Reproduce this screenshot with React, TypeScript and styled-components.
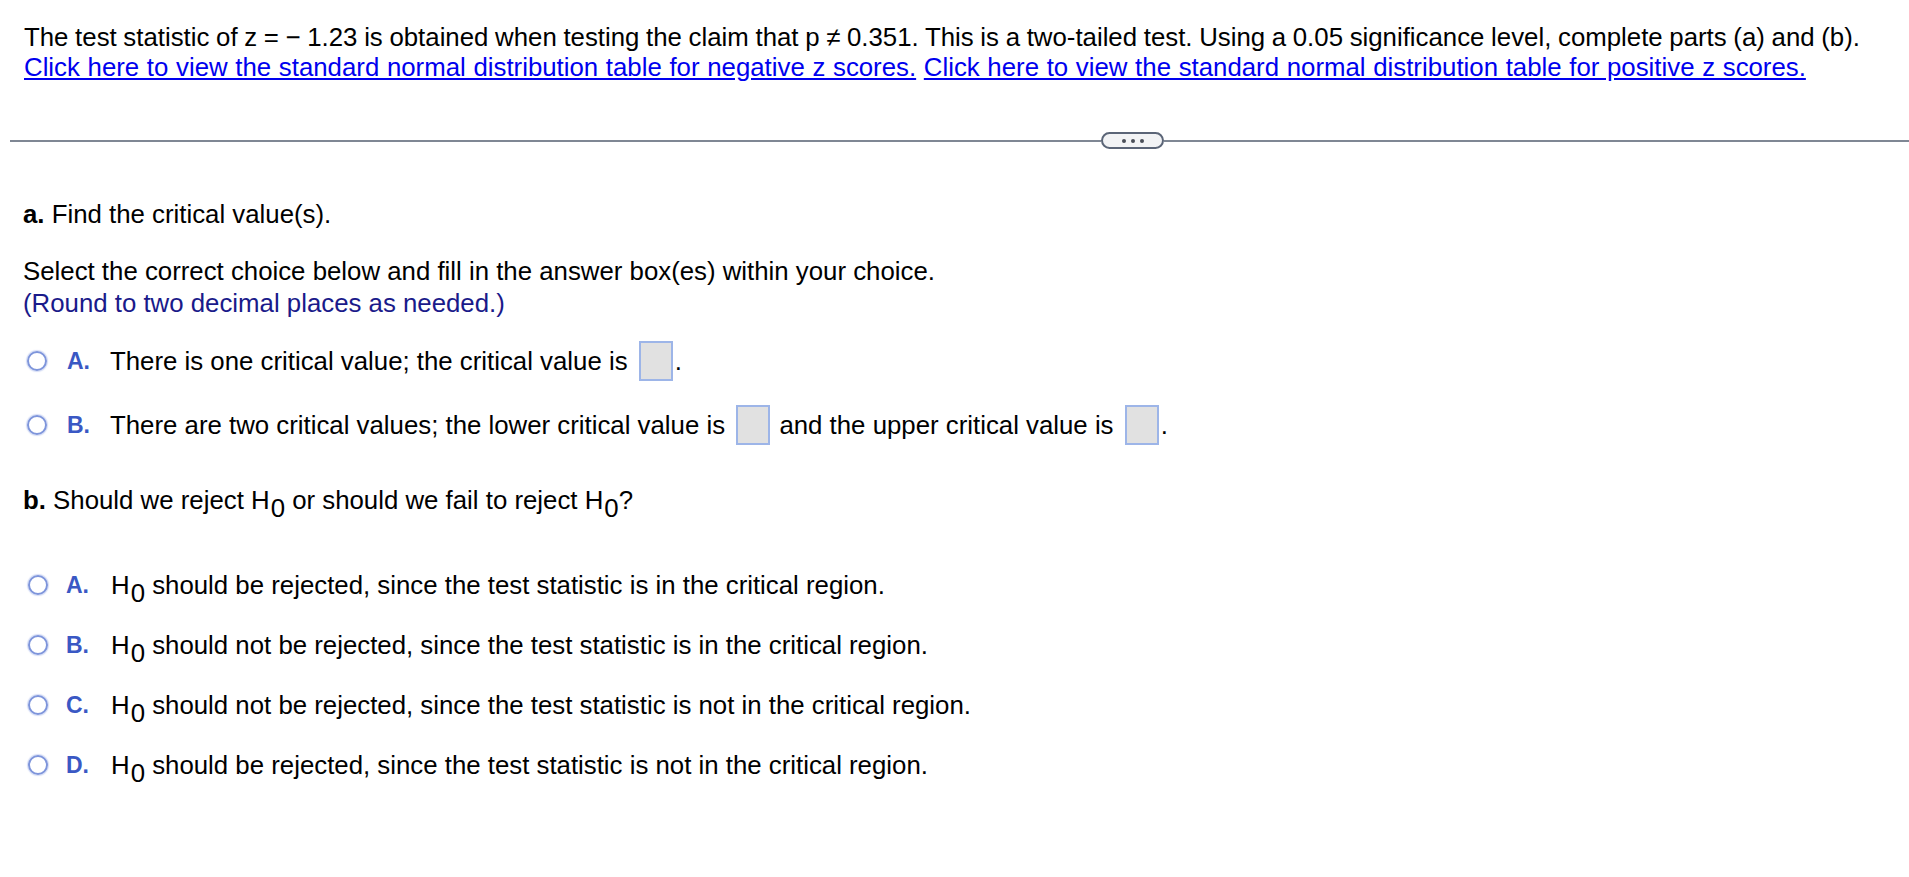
import React from "react";
import styled, { createGlobalStyle } from "styled-components";

const GlobalStyle = createGlobalStyle`
    html, body {
        margin: 0;
        padding: 0;
        background: #ffffff;
    }
    body {
        font-family: "Liberation Sans", Arial, Helvetica, sans-serif;
        font-size: 25.8px;
        color: #000000;
    }
`;

const Page = styled.div`
    padding-top: 22px;
    width: 1909px;
`;

const Prompt = styled.div`
    padding-left: 24px;
    line-height: 30px;
`;

const PromptLine = styled.div<{ $spacing: number }>`
    white-space: nowrap;
    word-spacing: ${(p) => p.$spacing}px;
`;

const TableLink = styled.a`
    color: #0000ee;
    text-decoration: underline;
    cursor: pointer;
`;

const DividerRow = styled.div`
    display: flex;
    align-items: center;
    margin: 50px 0 0 10px;
`;

const Rule = styled.div<{ $width?: number }>`
    height: 2px;
    background: #7f8794;
    ${(p) => (p.$width ? `width: ${p.$width}px;` : "flex: 1;")}
`;

const MorePill = styled.div`
    box-sizing: border-box;
    width: 63px;
    height: 17px;
    border: 2px solid #5b6577;
    border-radius: 9px;
    background: #f2f3f5;
    display: flex;
    align-items: center;
    justify-content: center;
    gap: 5px;
`;

const Dot = styled.span`
    width: 4px;
    height: 4px;
    border-radius: 50%;
    background: #4a4f58;
`;

const Section = styled.div<{ $top: number }>`
    padding-left: 23px;
    margin-top: ${(p) => p.$top}px;
`;

const Para = styled.div<{ $top?: number; $navy?: boolean }>`
    line-height: 30px;
    white-space: nowrap;
    margin-top: ${(p) => p.$top ?? 0}px;
    color: ${(p) => (p.$navy ? "#1a1a8a" : "#000000")};
`;

const Label = styled.b`
    font-weight: bold;
`;

const Choices = styled.div<{ $gap: number; $top: number }>`
    display: flex;
    flex-direction: column;
    gap: ${(p) => p.$gap}px;
    margin-top: ${(p) => p.$top}px;
`;

const Choice = styled.div`
    display: flex;
    align-items: center;
    height: 40px;
`;

const Radio = styled.span<{ $left: number }>`
    box-sizing: border-box;
    width: 20px;
    height: 20px;
    border-radius: 50%;
    border: 2px solid #7e95db;
    box-shadow: 0 0 1px 1px rgba(160, 178, 232, 0.45);
    margin-left: ${(p) => p.$left}px;
    flex-shrink: 0;
`;

const Letter = styled.span<{ $left: number }>`
    font-weight: bold;
    font-size: 23px;
    color: #3a58c4;
    margin-left: ${(p) => p.$left}px;
    width: ${(p) => 63 - p.$left}px;
    flex-shrink: 0;
`;

const ChoiceText = styled.span`
    white-space: nowrap;
    line-height: 40px;
`;

const AnswerBox = styled.span`
    box-sizing: border-box;
    display: inline-block;
    vertical-align: middle;
    width: 34px;
    height: 40px;
    background: #e1e1e1;
    border: 2px solid #9db5e8;
    margin: -4px 2px 0 4px;
`;

const Sub = styled.span`
    position: relative;
    top: 8px;
    margin-left: 1px;
`;

const H0 = () => (
    <>
        H<Sub>0</Sub>
    </>
);

const partBChoices = [
    { key: "A.", text: "should be rejected, since the test statistic is in the critical region." },
    { key: "B.", text: "should not be rejected, since the test statistic is in the critical region." },
    { key: "C.", text: "should not be rejected, since the test statistic is not in the critical region." },
    { key: "D.", text: "should be rejected, since the test statistic is not in the critical region." },
];

const App = () => {
    return (
        <Page>
            <GlobalStyle />
            <Prompt>
                <PromptLine $spacing={-0.5}>
                    The test statistic of z = − 1.23 is obtained when testing the
                    claim that p ≠ 0.351. This is a two-tailed test. Using a 0.05
                    significance level, complete parts (a) and (b).
                </PromptLine>
                <PromptLine $spacing={0.5}>
                    <TableLink>
                        Click here to view the standard normal distribution table for
                        negative z scores.
                    </TableLink>{" "}
                    <TableLink>
                        Click here to view the standard normal distribution table for
                        positive z scores.
                    </TableLink>
                </PromptLine>
            </Prompt>

            <DividerRow>
                <Rule $width={1091} />
                <MorePill>
                    <Dot />
                    <Dot />
                    <Dot />
                </MorePill>
                <Rule />
            </DividerRow>

            <Section $top={50}>
                <Para>
                    <Label>a.</Label> Find the critical value(s).
                </Para>
                <Para $top={27}>
                    Select the correct choice below and fill in the answer box(es)
                    within your choice.
                </Para>
                <Para $navy $top={2}>
                    (Round to two decimal places as needed.)
                </Para>

                <Choices $gap={24} $top={23}>
                    <Choice>
                        <Radio $left={4} />
                        <Letter $left={20}>A.</Letter>
                        <ChoiceText>
                            There is one critical value; the critical value is{" "}
                            <AnswerBox />.
                        </ChoiceText>
                    </Choice>
                    <Choice>
                        <Radio $left={4} />
                        <Letter $left={20}>B.</Letter>
                        <ChoiceText>
                            There are two critical values; the lower critical value is{" "}
                            <AnswerBox /> and the upper critical value is{" "}
                            <AnswerBox />.
                        </ChoiceText>
                    </Choice>
                </Choices>

                <Para $top={40}>
                    <Label>b.</Label> Should we reject <H0 /> or should we fail to
                    reject <H0 />?
                </Para>

                <Choices $gap={20} $top={50}>
                    {partBChoices.map((c) => (
                        <Choice key={c.key}>
                            <Radio $left={5} />
                            <Letter $left={18}>{c.key}</Letter>
                            <ChoiceText>
                                <H0 /> {c.text}
                            </ChoiceText>
                        </Choice>
                    ))}
                </Choices>
            </Section>
        </Page>
    );
};

export default App;
